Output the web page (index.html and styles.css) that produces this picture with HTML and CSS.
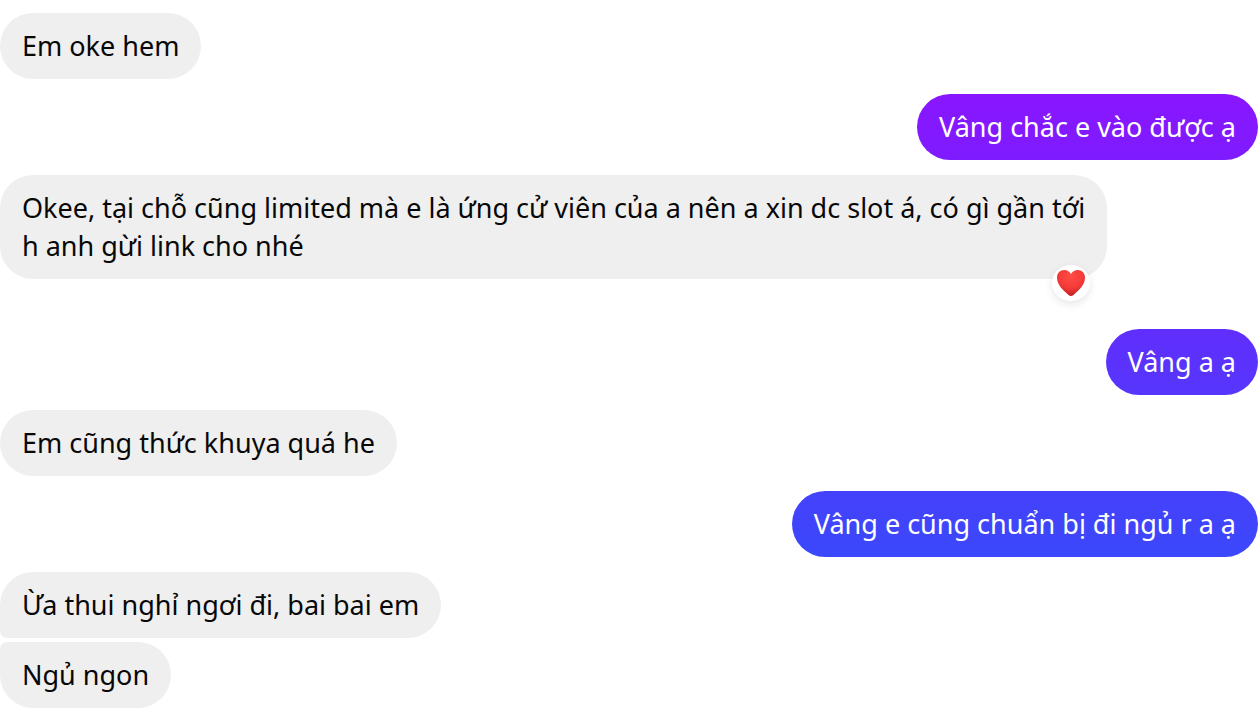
FILE: index.html
```html
<!DOCTYPE html>
<html lang="vi">
<head>
<meta charset="utf-8">
<meta name="viewport" content="width=device-width, initial-scale=1">
<title>Chat</title>
<link rel="stylesheet" href="styles.css">
</head>
<body>
<main class="thread">
  <p class="bubble received">Em oke hem</p>
  <p class="bubble sent violet">Vâng chắc e vào được ạ</p>
  <div class="bubble received reacted">Okee, tại chỗ cũng limited mà e là ứng cử viên của a nên a xin dc slot á, có gì gần tới h anh gừi link cho nhé
    <span class="reaction">
      <svg class="heart" viewBox="0 0 28 26" role="img" aria-label="Heart">
        <defs>
          <radialGradient id="heart-fill" cx="50%" cy="25%" r="75%">
            <stop offset="0" stop-color="#ff4c46"/>
            <stop offset="0.6" stop-color="#f43a38"/>
            <stop offset="1" stop-color="#bd2023"/>
          </radialGradient>
        </defs>
        <path fill="url(#heart-fill)" d="M14 4C12 1 10 0 7.500 0C3 0 0 3 0 7.500C0 15 6 20 11.500 25Q14 27 16.500 25C22 20 28 15 28 7.500C28 3 25 0 20.500 0C18 0 16 1 14 4Z"/>
      </svg>
    </span>
  </div>
  <p class="bubble sent indigo">Vâng a ạ</p>
  <p class="bubble received">Em cũng thức khuya quá he</p>
  <p class="bubble sent blue">Vâng e cũng chuẩn bị đi ngủ r a ạ</p>
  <div class="group">
    <p class="bubble received first">Ừa thui nghỉ ngơi đi, bai bai em</p>
    <p class="bubble received last">Ngủ ngon</p>
  </div>
</main>
</body>
</html>
```
FILE: styles.css
```css
* {
  box-sizing: border-box;
}

body {
  margin: 0;
  background: #fff;
  color: #080809;
  font-family: "Noto Sans", "Open Sans", sans-serif;
  font-size: 27px;
  line-height: 38px;
}

.thread {
  display: flex;
  flex-direction: column;
  gap: 15px;
  padding: 13px 2px 12px 0;
}

.bubble {
  width: fit-content;
  max-width: 88%;
  margin: 0;
  padding: 14px 22px;
  border-radius: 33px;
}

.received {
  background: #efefef;
}

.sent {
  align-self: flex-end;
  color: #fff;
}

.violet {
  background: linear-gradient(#8916ff, #7e1bff);
}

.indigo {
  background: linear-gradient(#602efd, #5636fc);
}

.blue {
  background: linear-gradient(#4541fb, #3b48fb);
}

.reacted {
  position: relative;
  margin-bottom: 35px;
  padding-right: 14px;
}

.reaction {
  position: absolute;
  right: 17px;
  bottom: -22px;
  display: flex;
  align-items: center;
  justify-content: center;
  width: 38px;
  height: 36px;
  border-radius: 50%;
  background: #fff;
  box-shadow: 0 3px 8px rgba(0, 0, 0, 0.1);
}

.heart {
  width: 28px;
  height: 26px;
}

.group {
  display: flex;
  flex-direction: column;
  gap: 4px;
}

.first {
  border-bottom-left-radius: 7px;
}

.last {
  border-top-left-radius: 7px;
}
```
